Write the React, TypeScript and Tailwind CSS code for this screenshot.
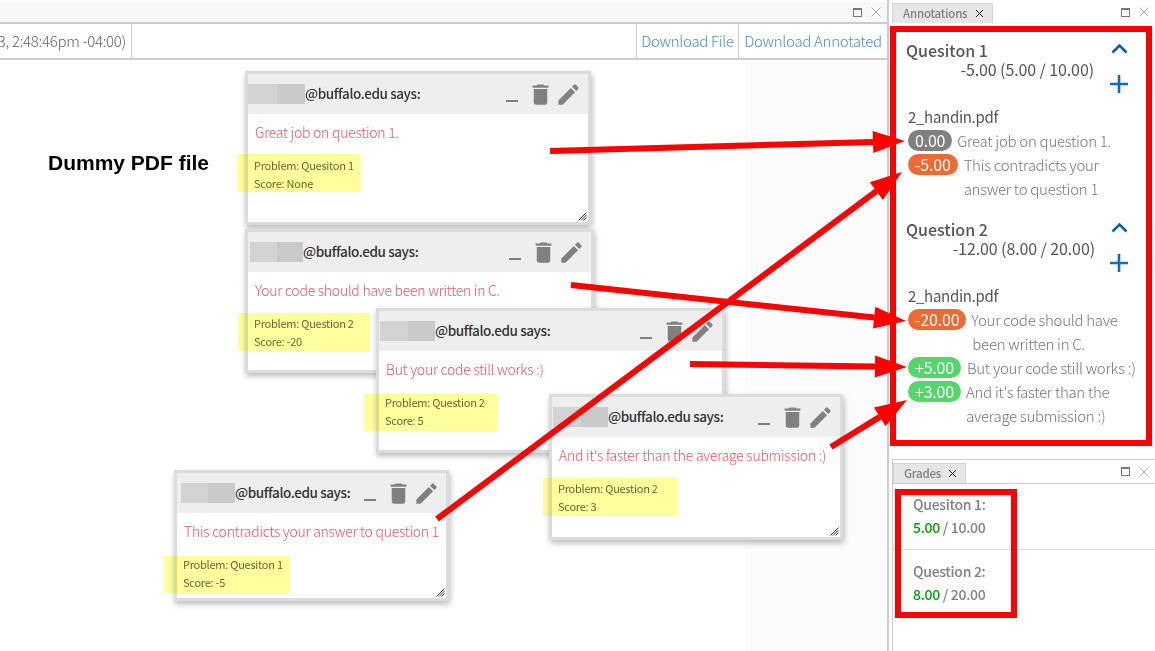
import React from "react";

const FONT = "[font-family:'Noto_Sans_CJK_SC','Noto_Sans',sans-serif]";

function Trash() {
  return (
    <svg width="27" height="27" viewBox="0 0 24 24" fill="#808080">
      <path d="M6 19c0 1.1.9 2 2 2h8c1.1 0 2-.9 2-2V7H6v12zM19 4h-3.5l-1-1h-5l-1 1H5v2h14V4z" />
    </svg>
  );
}
function Pencil() {
  return (
    <svg width="27" height="27" viewBox="0 0 24 24" fill="#808080">
      <path d="M3 17.25V21h3.75L17.81 9.94l-3.75-3.75L3 17.25zM20.71 7.04c.39-.39.39-1.02 0-1.41l-2.34-2.34c-.39-.39-1.02-.39-1.41 0l-1.83 1.83 3.75 3.75 1.83-1.83z" />
    </svg>
  );
}
function Grip() {
  return (
    <svg className="absolute right-[1px] bottom-[1px]" width="9" height="9" viewBox="0 0 9 9" stroke="#333" strokeWidth="1">
      <path d="M8.5 0.5 L0.5 8.5 M8.5 3 L3 8.5 M8.5 5.5 L5.5 8.5" />
    </svg>
  );
}

type CardProps = {
  x: number; y: number; w: number; h: number; pad: number; bw: number;
  text: string; problem: string; score: string;
  hl: { x: number; y: number; w: number; h: number };
};

function Card({ x, y, w, h, pad, bw, text, problem, score, hl }: CardProps) {
  return (
    <>
      <div
        className="absolute flex flex-col bg-white border-[3px] border-[#dcdcdc] shadow-[1px_3px_6px_rgba(0,0,0,0.28)]"
        style={{ left: x, top: y, width: w, height: h }}
      >
        <div className="flex items-center h-[40px] shrink-0 bg-[#eeeeee] pr-[6px]" style={{ paddingLeft: pad }}>
          <div className="flex h-[20px] shrink-0 -mt-[1px]" style={{ width: bw }}>
            <div className="flex-1 bg-[#d3d3d3]" />
            <div className="flex-1 bg-[#cacaca]" />
          </div>
          <span className="text-[13.5px] tracking-[-0.4px] font-medium text-[#333333] whitespace-nowrap -mt-[1px]">@buffalo.edu says:</span>
          <div className="ml-auto flex items-center">
            <span className="block w-[12px] h-[2px] bg-[#808080] mt-[13px] mr-[9px]" />
            <Trash />
            <span className="w-[1px]" />
            <Pencil />
          </div>
        </div>
        <div className="pl-[7px] pt-[6px] text-[14px] tracking-[-0.25px] leading-[24px] font-light text-[#ec5560] whitespace-nowrap">{text}</div>
        <div className="pl-[6px] pt-[12px] text-[11px] tracking-[-0.25px] leading-[18px] text-[#666655]">
          <div>{problem}</div>
          <div>{score}</div>
        </div>
        <Grip />
      </div>
      <div
        className="absolute bg-[#ffff9e] mix-blend-multiply"
        style={{ left: hl.x, top: hl.y, width: hl.w, height: hl.h }}
      />
    </>
  );
}

function Arrow({ x1, y1, x2, y2 }: { x1: number; y1: number; x2: number; y2: number }) {
  const dx = x2 - x1;
  const dy = y2 - y1;
  const len = Math.hypot(dx, dy);
  const ux = dx / len;
  const uy = dy / len;
  const bx = x2 - ux * 32;
  const by = y2 - uy * 32;
  const nx = -uy * 11;
  const ny = ux * 11;
  return (
    <>
      <line x1={x1} y1={y1} x2={bx} y2={by} stroke="#ff0000" strokeWidth="6" />
      <polygon points={`${x2},${y2} ${bx + nx},${by + ny} ${bx - nx},${by - ny}`} fill="#ff0000" />
    </>
  );
}

function WinIcons() {
  return (
    <div className="ml-auto flex items-center gap-[9px] pr-[6px]">
      <span className="block w-[9px] h-[9px] border border-[#777777] border-t-2" />
      <svg width="10" height="10" viewBox="0 0 10 10" stroke="#aaaaaa" strokeWidth="1">
        <path d="M0.5 0.5 L9.5 9.5 M9.5 0.5 L0.5 9.5" />
      </svg>
    </div>
  );
}

function TabClose() {
  return (
    <svg width="9" height="9" viewBox="0 0 9 9" stroke="#222222" strokeWidth="1">
      <path d="M1 1 L8 8 M8 1 L1 8" />
    </svg>
  );
}

function Tab({ label, w }: { label: string; w: number }) {
  return (
    <div
      className="flex items-center justify-between h-[20px] pl-[10px] pr-[8px] bg-[#e6e6e6] border-t border-x border-[#d2d2d2] text-[11.5px] tracking-[-0.2px] font-medium text-[#808080]"
      style={{ width: w }}
    >
      <span>{label}</span>
      <TabClose />
    </div>
  );
}

function Pill({ v, c }: { v: string; c: string }) {
  return (
    <span
      className={`shrink-0 h-[21px] mt-[1px] rounded-full px-[7px] text-[16px] tracking-[-0.2px] font-normal leading-[21px] text-white ${c}`}
    >
      {v}
    </span>
  );
}

function Row({ v, c, text, gap }: { v: string; c: string; text: React.ReactNode; gap: string }) {
  return (
    <div className="flex items-start text-[15px] tracking-[-0.28px] leading-[24px] font-light text-[#777777] whitespace-nowrap">
      <Pill v={v} c={c} />
      <div className={gap}>{text}</div>
    </div>
  );
}

function Section({ title, score, pad, children }: { title: string; score: string; pad: string; children: React.ReactNode }) {
  return (
    <div>
      <div className="flex h-[67px] pr-[16px]">
        <div className="flex-1">
          <div className="pl-[10px] text-[16px] leading-[24px] font-medium text-[#555555]">{title}</div>
          <div className={`text-right text-[16px] tracking-[-0.1px] leading-[24px] text-[#555555] -mt-[5px] ${pad}`}>{score}</div>
        </div>
        <div className="flex flex-col items-center w-[22px] pt-[5px]">
          <svg width="17" height="11" viewBox="0 0 17 11" fill="none" stroke="#0b5cad" strokeWidth="2.6">
            <path d="M1.5 9.5 L8.5 2.5 L15.5 9.5" />
          </svg>
          <svg className="mt-[20px]" width="20" height="20" viewBox="0 0 20 20" stroke="#1467c4" strokeWidth="2.6">
            <path d="M10 1 V19 M1 10 H19" />
          </svg>
        </div>
      </div>
      <div className="pl-[12px] text-[15px] tracking-[-0.3px] leading-[24px] text-[#555555]">2_handin.pdf</div>
      <div className="pl-[12px]">{children}</div>
    </div>
  );
}

export default function App() {
  return (
    <div className={`relative w-[1155px] h-[651px] overflow-hidden bg-white flex ${FONT}`}>
      {/* main pane */}
      <div className="w-[889px] h-full shrink-0 flex flex-col border-r-2 border-[#cccccc]">
        <div className="h-[22px] shrink-0 mt-[2px] bg-[#f8f8f8] border-b-2 border-[#cccccc] flex items-center">
          <WinIcons />
        </div>
        <div className="h-[36px] shrink-0 flex items-stretch border-b-2 border-[#cccccc] text-[15px] tracking-[-0.3px] font-light">
          <div className="w-[132px] border-r border-[#cccccc] flex items-center justify-end pr-[5px] text-[#666666] whitespace-nowrap overflow-hidden">
            3, 2:48:46pm -04:00)
          </div>
          <div className="ml-auto w-[103px] border-x border-[#cccccc] flex items-center justify-center text-[#4a8ddc] whitespace-nowrap">
            Download File
          </div>
          <div className="w-[148px] flex items-center justify-center text-[#4a8ddc] whitespace-nowrap">
            Download Annotated
          </div>
        </div>
        <div className="flex-1 flex">
          <div className="w-[745px] bg-white pl-[48px] pt-[87px] text-[21px] font-bold text-black [font-family:'Liberation_Sans',sans-serif]">
            Dummy PDF file
          </div>
          <div className="flex-1 bg-[#fcfcfc]" />
        </div>
      </div>

      {/* side pane */}
      <div className="flex-1 flex flex-col">
        <div className="ml-[3px] h-[23px] pt-[3px] flex items-end bg-white">
          <Tab label="Annotations" w={101} />
          <div className="flex-1 self-start -mt-[1px]">
            <div className="flex h-[20px] items-center"><WinIcons /></div>
          </div>
        </div>
        <div className="mt-[3px] h-[420px] ml-[1px] mr-[3px] border-[6px] border-[#ff0000] bg-white">
          <div className="pt-[6px]">
            <Section title="Quesiton 1" score="-5.00 (5.00 / 10.00)" pad="pr-[14px]">
              <Row v="0.00" c="bg-[#808080]" gap="ml-[5px]" text="Great job on question 1." />
              <Row v="-5.00" c="bg-[#ec6a33]" gap="ml-[6px]" text={<>This contradicts your<br />answer to question 1</>} />
            </Section>
            <div className="h-[16px]" />
            <Section title="Question 2" score="-12.00 (8.00 / 20.00)" pad="pr-[13px]">
              <Row v="-20.00" c="bg-[#ec6a33]" gap="ml-[5px]" text={<>Your code should have<br /><span className="pl-[1px]">been written in C.</span></>} />
              <Row v="+5.00" c="bg-[#55d66b]" gap="ml-[6px]" text="But your code still works :)" />
              <Row v="+3.00" c="bg-[#55d66b]" gap="ml-[5px]" text={<>And it's faster than the<br />average submission :)</>} />
            </Section>
          </div>
        </div>
        <div className="mt-[13px] ml-[3px] flex-1 flex flex-col border-l border-t border-[#cccccc]">
          <div className="h-[24px] flex items-end border-b border-[#cccccc] bg-white relative">
            <Tab label="Grades" w={73} />
            <div className="flex-1 self-center"><div className="flex"><WinIcons /></div></div>
          </div>
          <div className="pl-[20px] h-[66px] border-b border-[#dddddd] pt-[9px] text-[14px] tracking-[-0.3px] leading-[23px] font-medium text-[#808080]">
            <div>Quesiton 1:</div>
            <div><span className="text-[#00a000]">5.00</span> / 10.00</div>
          </div>
          <div className="pl-[20px] pt-[10px] text-[14px] tracking-[-0.3px] leading-[23px] font-medium text-[#808080]">
            <div>Question 2:</div>
            <div><span className="text-[#00a000]">8.00</span> / 20.00</div>
          </div>
        </div>
      </div>

      {/* grades red outline */}
      <div className="absolute left-[895px] top-[489px] w-[122px] h-[129px] border-[6px] border-[#ff0000]" />

      <Card x={245} y={71} w={346} h={154} pad={0} bw={57} text="Great job on question 1." problem="Problem: Quesiton 1" score="Score: None" hl={{ x: 237, y: 154, w: 124, h: 38 }} />
      <Card x={245} y={229} w={349} h={144} pad={2} bw={53} text="Your code should have been written in C." problem="Problem: Question 2" score="Score: -20" hl={{ x: 238, y: 313, w: 132, h: 38 }} />
      <Card x={376} y={308} w={349} h={145} pad={1} bw={55} text="But your code still works :)" problem="Problem: Question 2" score="Score: 5" hl={{ x: 364, y: 394, w: 134, h: 37 }} />
      <Card x={549} y={394} w={294} h={146} pad={1} bw={55} text="And it's faster than the average submission :)" problem="Problem: Question 2" score="Score: 3" hl={{ x: 543, y: 478, w: 135, h: 38 }} />
      <Card x={174} y={470} w={275} h={131} pad={4} bw={54} text="This contradicts your answer to question 1" problem="Problem: Quesiton 1" score="Score: -5" hl={{ x: 164, y: 556, w: 126, h: 37 }} />

      <svg className="absolute left-0 top-0 pointer-events-none" width="1155" height="651">
        <Arrow x1={550} y1={151} x2={905} y2={141} />
        <Arrow x1={437} y1={519} x2={902} y2={172} />
        <Arrow x1={571} y1={285} x2={906} y2={321} />
        <Arrow x1={690} y1={364} x2={907} y2={367} />
        <Arrow x1={831} y1={447} x2={907} y2={400} />
      </svg>
    </div>
  );
}
